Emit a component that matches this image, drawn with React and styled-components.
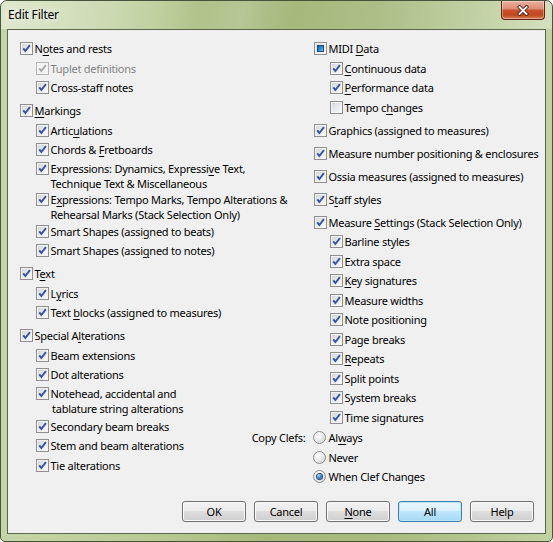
import React from 'react';
import styled, { createGlobalStyle } from 'styled-components';

const GlobalStyle = createGlobalStyle`
  html, body {
    margin: 0;
    padding: 0;
    background: #ffffff;
  }
  body {
    font-family: "Noto Sans", "Open Sans", sans-serif;
  }
`;

const Window = styled.div`
  box-sizing: border-box;
  width: 553px;
  height: 542px;
  display: flex;
  flex-direction: column;
  border: 1px solid #46543a;
  border-radius: 7px 7px 5px 5px;
  overflow: hidden;
  background: linear-gradient(90deg, #c6d5a8 0%, #b8ca93 28%, #a5b97b 48%, #a7bb7f 68%, #b3c68f 86%, #c2d2a3 100%);
  font-family: "Noto Sans", "Open Sans", sans-serif;
  font-size: 11px;
  letter-spacing: -0.25px;
  color: #000;
`;

const TitleBar = styled.div`
  flex: none;
  height: 28px;
  display: flex;
  align-items: flex-start;
  padding: 0 7px 0 7px;
  background: linear-gradient(
    104deg,
    rgba(255, 255, 255, 0.45) 0%,
    rgba(255, 255, 255, 0.22) 22%,
    rgba(255, 255, 255, 0) 36%,
    rgba(255, 255, 255, 0.16) 44%,
    rgba(255, 255, 255, 0) 53%,
    rgba(255, 255, 255, 0.08) 72%,
    rgba(255, 255, 255, 0.3) 100%
  );
`;

const Title = styled.span`
  margin-top: 6px;
  font-size: 12px;
  letter-spacing: -0.2px;
  line-height: 16px;
  text-shadow: 0 0 6px rgba(255, 255, 255, 0.9), 0 0 12px rgba(255, 255, 255, 0.7);
`;

const CloseButton = styled.div`
  margin-left: auto;
  box-sizing: border-box;
  width: 44px;
  height: 19px;
  border: 1px solid #5d2417;
  border-top: none;
  border-radius: 0 0 4px 4px;
  background: linear-gradient(#eab0a0 0%, #dd8d76 42%, #c8502f 52%, #c2471f 78%, #d9805a 100%);
  box-shadow: inset 0 0 0 1px rgba(255, 255, 255, 0.35);
  display: flex;
  align-items: center;
  justify-content: center;
`;

const Client = styled.div`
  flex: 1;
  margin: 0 6px 7px;
  border: 1px solid #58674a;
  background: #f0f0f0;
  display: flex;
  flex-direction: column;
  padding: 9px 11px 11px 11.5px;
`;

const Columns = styled.div`
  display: grid;
  grid-template-columns: 294px 1fr;
`;

const Column = styled.div`
  display: flex;
  flex-direction: column;
  gap: 3.5px;
`;

const Group = styled.div`
  display: flex;
  flex-direction: column;
`;

const Row = styled.div`
  box-sizing: border-box;
  display: flex;
  align-items: flex-start;
  min-height: 19.5px;
  padding: ${(p) => (p.$multi ? `1px 0 ${p.$spread ? 1 : 0}px` : '2px 0 2.5px')};
  padding-left: ${(p) => p.$level * 16}px;
`;

const Box = styled.span`
  flex: none;
  box-sizing: border-box;
  width: 13px;
  height: 13px;
  margin: 1px 2px 0 0;
  border: 1px solid ${(p) => (p.$disabled ? '#b5b5b5' : '#8e8f8f')};
  background: ${(p) =>
    p.$disabled
      ? '#f4f4f4'
      : 'linear-gradient(135deg, #d0d3d7 0%, #e8eaec 50%, #fcfcfc 100%)'};
  box-shadow: inset 0 0 0 1px #f4f4f4;
  display: flex;
  align-items: center;
  justify-content: center;
`;

const Mixed = styled.span`
  box-sizing: border-box;
  width: 7px;
  height: 7px;
  border: 1px solid #1c4a7a;
  background: linear-gradient(135deg, #1f64a3 0%, #2f8fd3 55%, #73c6ef 100%);
`;

const Label = styled.span`
  display: flex;
  flex-direction: column;
  line-height: 15px;
  white-space: nowrap;
  color: ${(p) => (p.$disabled ? '#838383' : '#000')};
`;

const Line = styled.span`
  display: block;
  padding-left: ${(p) => (p.$spread ? '1.5px' : '0')};
`;

const Key = styled.u`
  text-decoration: underline;
  text-underline-offset: 1.5px;
  text-decoration-thickness: 1px;
`;

const ClefGroup = styled.div`
  display: grid;
  grid-template-columns: 56px auto;
  column-gap: 7px;
  margin-left: -64px;
  margin-top: -2.5px;
`;

const ClefLabel = styled.span`
  justify-self: end;
  line-height: 19.5px;
  white-space: nowrap;
`;

const RadioList = styled.div`
  display: flex;
  flex-direction: column;
`;

const RadioRow = styled.div`
  display: flex;
  align-items: center;
  height: 19.5px;
  white-space: nowrap;
`;

const RadioCircle = styled.span`
  flex: none;
  box-sizing: border-box;
  width: 13px;
  height: 13px;
  margin-right: 3px;
  border-radius: 50%;
  border: 1px solid #8e8f8f;
  background: radial-gradient(circle at 35% 30%, #ffffff 0%, #e9e9e9 50%, #cbcbcb 100%);
  display: flex;
  align-items: center;
  justify-content: center;
`;

const RadioDot = styled.span`
  width: 5px;
  height: 5px;
  border-radius: 50%;
  background: radial-gradient(circle at 35% 30%, #b2e2fa 0%, #3a8dd2 45%, #164a85 100%);
  box-shadow: 0 0 0 1px #2a4a70;
`;

const ButtonRow = styled.div`
  margin-top: auto;
  display: flex;
  justify-content: flex-end;
  gap: 8px;
`;

const Button = styled.button`
  box-sizing: border-box;
  width: 64px;
  height: 21px;
  padding: 0;
  font-family: inherit;
  font-size: 11px;
  letter-spacing: -0.25px;
  color: #000;
  border: 1px solid ${(p) => (p.$default ? '#3c7fb1' : '#707070')};
  border-radius: 3px;
  background: ${(p) =>
    p.$default
      ? 'linear-gradient(#eaf6fd 0%, #d9f0fc 45%, #bee6fd 50%, #a7d9f5 100%)'
      : 'linear-gradient(#f2f2f2 0%, #ebebeb 45%, #dddddd 50%, #cfcfcf 100%)'};
  box-shadow: inset 0 0 0 1px ${(p) => (p.$default ? '#b9e6fb' : '#fbfbfb')};
`;

// '&x' underlines x, '&&' is a literal ampersand
const mnemonic = (text) => {
  const parts = [];
  let buf = '';
  for (let i = 0; i < text.length; i++) {
    const ch = text[i];
    if (ch === '&') {
      if (text[i + 1] === '&') {
        buf += '&';
        i++;
        continue;
      }
      if (buf) parts.push(buf);
      buf = '';
      parts.push(<Key key={i}>{text[i + 1]}</Key>);
      i++;
      continue;
    }
    buf += ch;
  }
  if (buf) parts.push(buf);
  return parts;
};

const Tick = ({ color }) => (
  <svg width="11" height="11" viewBox="0 0 11 11">
    <path d="M2.2 5.3 L4.4 8 L8.9 2.2" fill="none" stroke={color} strokeWidth="2" />
  </svg>
);

const CheckItem = ({ label, level = 0, state = 'on', disabled, spread }) => {
  const lines = Array.isArray(label) ? label : [label];
  return (
    <Row $level={level} $multi={lines.length > 1} $spread={spread}>
      <Box $disabled={disabled}>
        {state === 'on' && <Tick color={disabled ? '#a9a9a9' : '#3b55a3'} />}
        {state === 'mixed' && <Mixed />}
      </Box>
      <Label $disabled={disabled}>
        {lines.map((l, i) => (
          <Line key={i} $spread={spread && i > 0}>
            {mnemonic(l)}
          </Line>
        ))}
      </Label>
    </Row>
  );
};

const leftGroups = [
  [
    { label: 'N&otes and rests' },
    { label: 'Tuplet definitions', level: 1, disabled: true },
    { label: 'Cross-staff notes', level: 1 },
  ],
  [
    { label: '&Markings' },
    { label: 'Artic&ulations', level: 1 },
    { label: 'Chords && &Fretboards', level: 1 },
    { label: ['Expressions: Dynamics, Expressi&ve Text,', 'Technique Text && Miscellaneous'], level: 1 },
    { label: ['E&xpressions: Tempo Marks, Tempo Alterations &&', 'Rehearsal Marks (Stack Selection Only)'], level: 1 },
    { label: 'Smart Shapes (assi&gned to beats)', level: 1 },
    { label: 'Smart Shapes (assi&gned to notes)', level: 1 },
  ],
  [
    { label: 'T&ext' },
    { label: 'L&yrics', level: 1 },
    { label: 'Text &blocks (assigned to measures)', level: 1 },
  ],
  [
    { label: 'Special A&lterations' },
    { label: 'Beam extensions', level: 1 },
    { label: 'Dot alterations', level: 1 },
    { label: ['Notehead, accidental and', 'tablature string alterations'], level: 1, spread: true },
    { label: 'Secondary beam breaks', level: 1 },
    { label: 'Stem and beam alterations', level: 1 },
    { label: 'Tie alterations', level: 1 },
  ],
];

const rightGroups = [
  [
    { label: 'MIDI &Data', state: 'mixed' },
    { label: '&Continuous data', level: 1 },
    { label: '&Performance data', level: 1 },
    { label: 'Tempo c&hanges', level: 1, state: 'off' },
  ],
  [{ label: 'Graphics (assigned to measures)' }],
  [{ label: 'Measure number positioning && enclosures' }],
  [{ label: 'Ossia measures (assigned to measures)' }],
  [{ label: 'S&taff styles' }],
  [
    { label: 'Measure &Settings (Stack Selection Only)' },
    { label: 'Barline styles', level: 1 },
    { label: 'Extra space', level: 1 },
    { label: '&Key signatures', level: 1 },
    { label: 'Measure widths', level: 1 },
    { label: 'Note positioning', level: 1 },
    { label: 'Page breaks', level: 1 },
    { label: '&Repeats', level: 1 },
    { label: 'Split points', level: 1 },
    { label: 'System breaks', level: 1 },
    { label: 'Time signatures', level: 1 },
  ],
];

const clefOptions = [
  { label: 'Al&ways' },
  { label: 'Never' },
  { label: 'When Clef Changes', selected: true },
];

const buttons = [
  { label: 'OK' },
  { label: 'Cancel' },
  { label: '&None' },
  { label: 'All', isDefault: true },
  { label: 'Help' },
];

const renderGroups = (groups) =>
  groups.map((g, gi) => (
    <Group key={gi}>
      {g.map((item, ii) => (
        <CheckItem key={ii} {...item} />
      ))}
    </Group>
  ));

const App = () => {
  return (
    <>
      <GlobalStyle />
      <Window>
        <TitleBar>
          <Title>Edit Filter</Title>
          <CloseButton>
            <svg width="14" height="11" viewBox="0 0 14 11">
              <path d="M3.5 2 L10.5 9 M10.5 2 L3.5 9" stroke="#4a1c12" strokeWidth="3.6" strokeLinecap="square" />
              <path d="M3.5 2 L10.5 9 M10.5 2 L3.5 9" stroke="#ffffff" strokeWidth="1.9" strokeLinecap="square" />
            </svg>
          </CloseButton>
        </TitleBar>
        <Client>
          <Columns>
            <Column>{renderGroups(leftGroups)}</Column>
            <Column>
              {renderGroups(rightGroups)}
              <ClefGroup>
                <ClefLabel>Copy Clefs:</ClefLabel>
                <RadioList>
                  {clefOptions.map((o, i) => (
                    <RadioRow key={i}>
                      <RadioCircle>{o.selected && <RadioDot />}</RadioCircle>
                      {mnemonic(o.label)}
                    </RadioRow>
                  ))}
                </RadioList>
              </ClefGroup>
            </Column>
          </Columns>
          <ButtonRow>
            {buttons.map((b, i) => (
              <Button key={i} $default={b.isDefault}>
                {mnemonic(b.label)}
              </Button>
            ))}
          </ButtonRow>
        </Client>
      </Window>
    </>
  );
};

export default App;
